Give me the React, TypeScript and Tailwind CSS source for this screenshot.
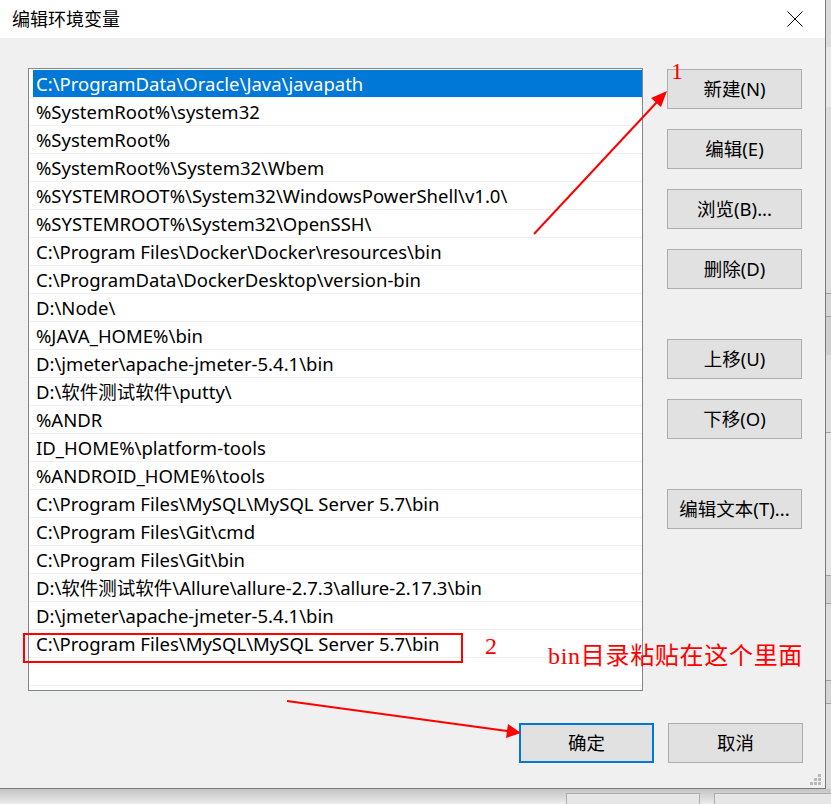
import React from "react";

const paths = [
  "C:\\ProgramData\\Oracle\\Java\\javapath",
  "%SystemRoot%\\system32",
  "%SystemRoot%",
  "%SystemRoot%\\System32\\Wbem",
  "%SYSTEMROOT%\\System32\\WindowsPowerShell\\v1.0\\",
  "%SYSTEMROOT%\\System32\\OpenSSH\\",
  "C:\\Program Files\\Docker\\Docker\\resources\\bin",
  "C:\\ProgramData\\DockerDesktop\\version-bin",
  "D:\\Node\\",
  "%JAVA_HOME%\\bin",
  "D:\\jmeter\\apache-jmeter-5.4.1\\bin",
  "D:\\软件测试软件\\putty\\",
  "%ANDR",
  "ID_HOME%\\platform-tools",
  "%ANDROID_HOME%\\tools",
  "C:\\Program Files\\MySQL\\MySQL Server 5.7\\bin",
  "C:\\Program Files\\Git\\cmd",
  "C:\\Program Files\\Git\\bin",
  "D:\\软件测试软件\\Allure\\allure-2.7.3\\allure-2.17.3\\bin",
  "D:\\jmeter\\apache-jmeter-5.4.1\\bin",
  "C:\\Program Files\\MySQL\\MySQL Server 5.7\\bin",
  "",
];

const ui = "font-['Noto_Sans','Noto_Sans_CJK_SC',sans-serif]";

const Btn = ({ label, primary }: { label: string; primary?: boolean }) => (
  <div
    className={
      "w-[135px] h-[40px] flex items-center justify-center bg-[#e1e1e1] text-[18.5px] text-black " +
      (primary ? "border-2 border-[#0078d7]" : "border border-[#adadad]")
    }
  >
    {label}
  </div>
);

export default function App() {
  return (
    <div className={"relative w-[831px] h-[804px] overflow-hidden bg-[#e9e9e9] flex flex-col " + ui}>
      <div className="flex h-[789px]">
        {/* dialog */}
        <div className="w-[826px] flex flex-col border-r border-b border-[#7a7a7a]">
          <div className="h-[38px] bg-white flex items-center justify-between pl-[12px] pr-[22px]">
            <span className="text-[18px] text-black">编辑环境变量</span>
            <svg width="16" height="16" viewBox="0 0 16 16">
              <path d="M0.5 0.5 L15.5 15.5 M15.5 0.5 L0.5 15.5" stroke="#000" strokeWidth="1" />
            </svg>
          </div>
          <div className="flex-1 bg-[#f0f0f0] relative flex flex-col pl-[28px] pt-[30px]">
            <div className="flex">
              <div className="w-[615px] h-[623px] bg-white border border-[#828790] pt-[1px]">
                {paths.map((p, i) => (
                  <div key={i} className="h-[28px] border-b border-[#f0f0f0] flex">
                    <div
                      className={
                        "flex-1 ml-[4px] pl-[3px] flex items-center text-[18.5px] whitespace-nowrap " +
                        (i === 0 ? "bg-[#0078d7] text-white" : "text-black")
                      }
                    >
                      {p}
                    </div>
                  </div>
                ))}
              </div>
              <div className="ml-[24px] pt-[1px] flex flex-col gap-[20px]">
                <Btn label="新建(N)" />
                <Btn label="编辑(E)" />
                <Btn label="浏览(B)..." />
                <Btn label="删除(D)" />
                <div className="h-[10px]" />
                <Btn label="上移(U)" />
                <Btn label="下移(O)" />
                <div className="h-[10px]" />
                <Btn label="编辑文本(T)..." />
              </div>
            </div>
            <div className="flex justify-end gap-[14px] mt-[32px] pr-[22px]">
              <Btn label="确定" primary />
              <Btn label="取消" />
            </div>
            <svg className="absolute right-[3px] bottom-[2px]" width="12" height="12" viewBox="0 0 12 12">
              <g fill="#b8b8b8">
                <rect x="8" y="0" width="3" height="3" />
                <rect x="4" y="4" width="3" height="3" />
                <rect x="8" y="4" width="3" height="3" />
                <rect x="0" y="8" width="3" height="3" />
                <rect x="4" y="8" width="3" height="3" />
                <rect x="8" y="8" width="3" height="3" />
              </g>
            </svg>
          </div>
        </div>
        {/* window behind, right edge */}
        <div className="flex-1 bg-[#dcdcdc] flex flex-col">
          <div className="h-[47px]" />
          <div className="h-[60px] bg-[#e8e8e8]" />
          <div className="h-[186px]" />
          <div className="h-[23px] border-t border-[#a0a0a0] bg-[#d6d6d6]" />
          <div className="h-[39px] border-t border-[#a0a0a0] bg-[#cfcfcf]" />
          <div className="h-[77px]" />
          <div className="h-[143px] border-t border-[#a0a0a0] bg-[#e4e4e4]" />
          <div className="h-[28px] border-t border-[#a0a0a0] bg-[#d0d0d0]" />
          <div className="h-[77px] border-t border-[#a0a0a0]" />
          <div className="h-[23px] border-t border-[#a0a0a0] bg-[#d4d4d4]" />
          <div className="flex-1 border-t border-[#a0a0a0]" />
        </div>
      </div>
      {/* shadow + window behind, bottom */}
      <div className="flex-1 bg-gradient-to-b from-[#c4c4c4] to-[#ececec] flex gap-[14px] pl-[566px] pt-[4px]">
        <div className="w-[134px] border border-b-0 border-[#adadad] bg-[#e6e6e6]" />
        <div className="flex-1 border border-b-0 border-r-0 border-[#adadad] bg-[#e6e6e6]" />
      </div>

      {/* annotations */}
      <div className="absolute left-[23px] top-[633px] w-[440px] h-[30px] border-2 border-[#ff0000]" />
      <span className="absolute left-[671px] top-[57px] text-[24px] leading-[28px] text-[#ff0000] font-['Liberation_Serif',serif]">
        1
      </span>
      <span className="absolute left-[485px] top-[632px] text-[24px] leading-[28px] text-[#ff0000] font-['Liberation_Serif',serif]">
        2
      </span>
      <span className="absolute left-[548px] top-[641px] text-[24px] leading-[30px] text-[#ff0000] font-['Liberation_Serif','Noto_Sans_CJK_SC',serif] tracking-[0.7px]">
        bin目录粘贴在这个里面
      </span>
      <svg className="absolute left-0 top-0 pointer-events-none" width="831" height="804">
        <line x1="534" y1="234" x2="657" y2="102" stroke="#ff0000" strokeWidth="2" />
        <polygon points="667,91 661,107 651,98" fill="#ff0000" />
        <line x1="287" y1="701" x2="507" y2="731" stroke="#ff0000" strokeWidth="2" />
        <polygon points="521,733 506,738 508,724" fill="#ff0000" />
      </svg>
    </div>
  );
}
